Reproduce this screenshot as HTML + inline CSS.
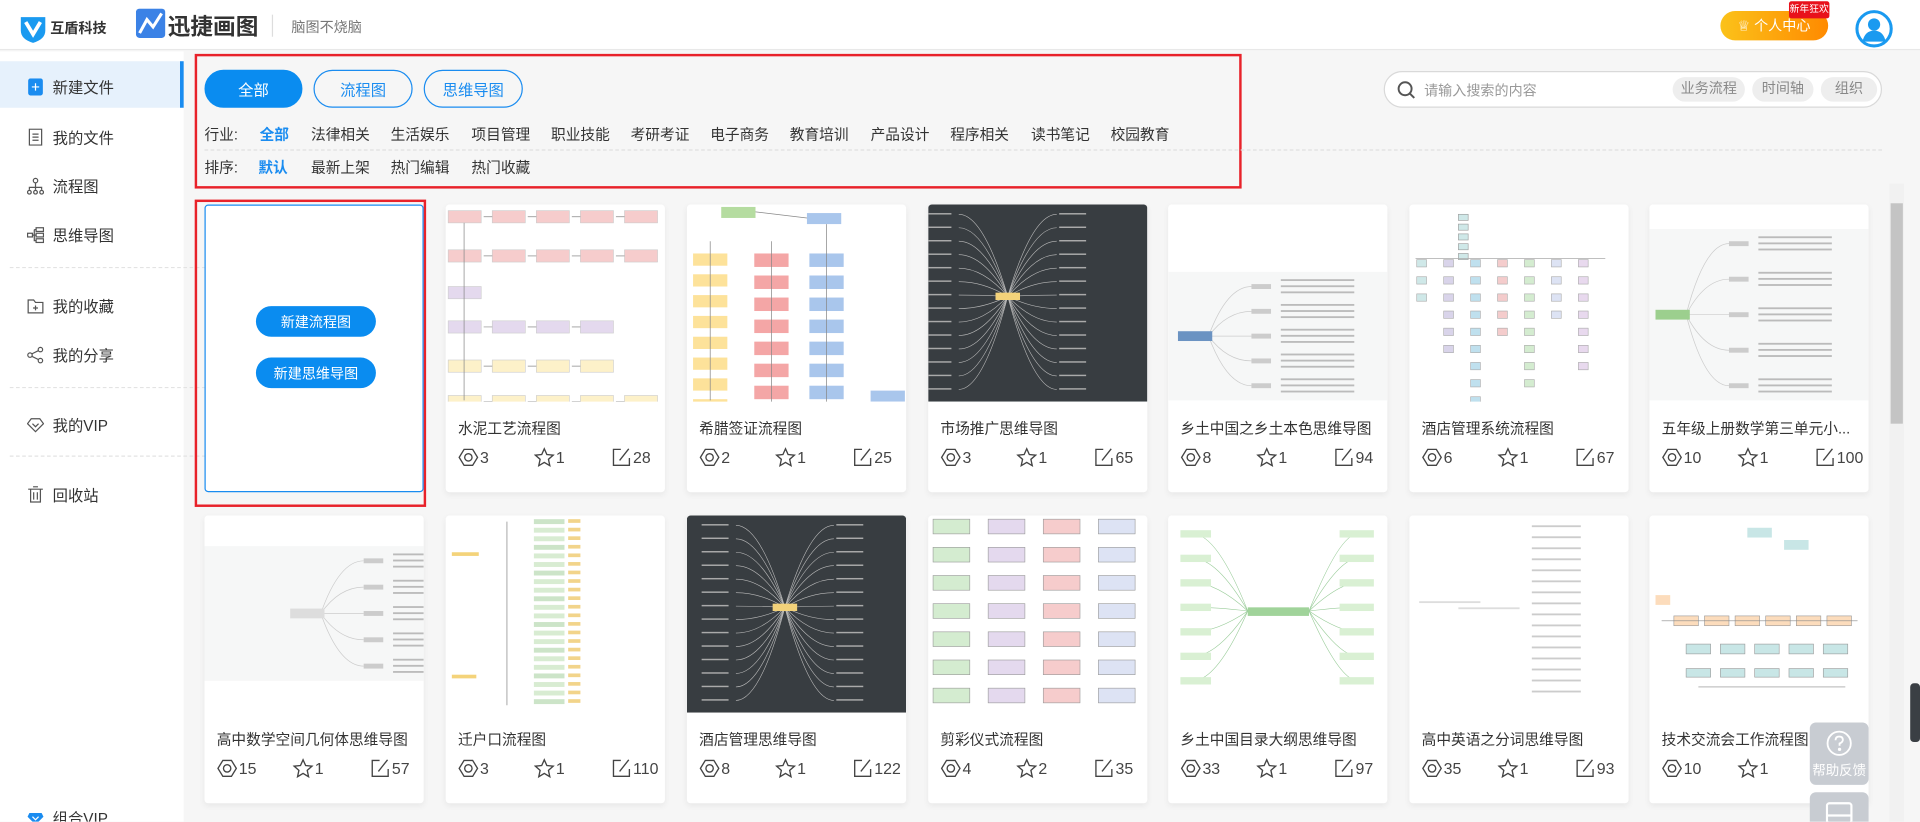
<!DOCTYPE html>
<html><head><meta charset="utf-8">
<style>
*{margin:0;padding:0;box-sizing:border-box}
html,body{width:1920px;height:822px;overflow:hidden;background:#f6f6f6}
body{font-family:"Liberation Sans","Noto Sans CJK SC",sans-serif;color:#333}
#w{position:absolute;left:0;top:0;width:1568px;height:671px;transform:scale(1.22449);transform-origin:0 0;background:#f6f6f6;overflow:hidden}
.a{position:absolute}
.hd{left:0;top:0;width:1568px;height:41px;background:#fff;border-bottom:1px solid #e8e8e8}
.sb{left:0;top:42px;width:150px;height:640px;background:#fff}
.si{position:absolute;left:22px;font-size:12.5px;color:#333;display:flex;align-items:center;gap:7px}
.si svg{width:14px;height:14px}
.dash{position:absolute;left:8px;border-top:1px dashed #e3e3e3;width:165px}
.btn{position:absolute;top:57px;height:31px;border-radius:16px;border:1px solid #1a8cf0;color:#1a8cf0;font-size:12.5px;display:flex;align-items:center;justify-content:center}
.t{position:absolute;font-size:12px;color:#333;white-space:nowrap}
.card{position:absolute;width:179px;height:235px;background:#fff;border-radius:3px;box-shadow:0 2px 5px rgba(0,0,0,.06);overflow:hidden}
.card svg.th{position:absolute;left:0;top:0;width:179px;height:161px}
.ti{position:absolute;left:10px;top:174px;font-size:12px;color:#333;white-space:nowrap}
.st{position:absolute;top:198px;font-size:13px;color:#444;display:flex;align-items:center;gap:1px}
.st svg{width:17px;height:17px}
.nb{position:absolute;left:41px;width:98px;height:25px;border-radius:13px;background:#0a8cf0;color:#fff;font-size:11.5px;display:flex;align-items:center;justify-content:center}
</style></head><body>
<div id="w">
<div class="a hd">
 <svg class="a" style="left:16px;top:12px" width="22" height="24" viewBox="0 0 22 24"><path d="M1 2 H21 V13 Q21 20 11 23 Q1 20 1 13Z" fill="#1a9af0"/><path d="M5 6 L11 16 L17 6" stroke="#fff" stroke-width="3" fill="none"/></svg>
 <div class="a" style="left:41px;top:15px;font-size:11.5px;font-weight:bold;color:#333">互盾科技</div>
 <svg class="a" style="left:111px;top:7px" width="24" height="24" viewBox="0 0 24 24"><rect width="24" height="24" rx="3" fill="#3b82e6"/><path d="M3 20 L9 9 L14 15 L21 4" stroke="#fff" stroke-width="2.5" fill="none"/></svg>
 <div class="a" style="left:137px;top:8px;font-size:18.5px;font-weight:bold;color:#333">迅捷画图</div>
 <div class="a" style="left:222px;top:12px;width:1px;height:18px;background:#ddd"></div>
 <div class="a" style="left:238px;top:14px;font-size:11.5px;color:#777">脑图不烧脑</div>
 <div class="a" style="left:1405px;top:9px;width:88px;height:24px;border-radius:12px;background:linear-gradient(90deg,#fbc21a,#ff8a00);color:#fff;font-size:11.5px;display:flex;align-items:center;padding-left:14px">♕&nbsp;个人中心</div>
 <div class="a" style="left:1461px;top:1px;width:33px;height:14px;background:#e8111b;color:#fff;font-size:8px;line-height:14px;text-align:center;border-radius:2px;white-space:nowrap;overflow:hidden">新年狂欢</div>
 <svg class="a" style="left:1515px;top:8px" width="31" height="31" viewBox="0 0 31 31"><circle cx="15.5" cy="15.5" r="14" fill="#fff" stroke="#1a9af0" stroke-width="2.5"/><circle cx="15.5" cy="12" r="5" fill="#1a9af0"/><path d="M6 26 Q8 17 15.5 17 Q23 17 25 26Z" fill="#1a9af0"/></svg>
</div>
<div class="a sb">
 <div class="a" style="left:0;top:8px;width:148px;height:38px;background:#e6f1fc"></div>
 <div class="a" style="left:147px;top:8px;width:3px;height:38px;background:#1a8cf0"></div>
 <div class="si" style="top:19px"><svg viewBox="0 0 14 14"><rect x="1" y="0" width="12" height="14" rx="2" fill="#1a8cf0"/><path d="M4 7H10M7 4V10" stroke="#fff"/></svg>新建文件</div>
 <div class="si" style="top:60px"><svg viewBox="0 0 14 14" fill="none" stroke="#555"><rect x="2" y="0.5" width="10" height="13"/><path d="M4.5 4.5H9.5M4.5 7H9.5M4.5 9.5H9.5"/></svg>我的文件</div>
 <div class="si" style="top:100px"><svg viewBox="0 0 14 14" fill="none" stroke="#555"><circle cx="7" cy="2.5" r="1.8"/><circle cx="2" cy="12" r="1.5"/><circle cx="7" cy="12" r="1.5"/><circle cx="12" cy="12" r="1.5"/><path d="M7 4.5V10M2 10V8H12V10"/></svg>流程图</div>
 <div class="si" style="top:140px"><svg viewBox="0 0 14 14" fill="none" stroke="#555"><rect x="0.5" y="5.5" width="4" height="3"/><rect x="7.5" y="1" width="6" height="3"/><rect x="7.5" y="5.5" width="6" height="3"/><rect x="7.5" y="10" width="6" height="3"/><path d="M4.5 7H7.5M6 2.5V11.5H7.5M6 2.5H7.5"/></svg>思维导图</div>
 <div class="dash" style="top:176px"></div>
 <div class="si" style="top:198px"><svg viewBox="0 0 14 14" fill="none" stroke="#555"><path d="M1 2H5.5L7 4H13V12.5H1Z"/><path d="M5 8.5H9M7 6.5V10.5"/></svg>我的收藏</div>
 <div class="si" style="top:238px"><svg viewBox="0 0 14 14" fill="none" stroke="#555"><circle cx="2.5" cy="7" r="1.8"/><circle cx="11" cy="2.5" r="1.8"/><circle cx="11" cy="11.5" r="1.8"/><path d="M4 6L9.5 3.3M4 8L9.5 10.7"/></svg>我的分享</div>
 <div class="dash" style="top:274px"></div>
 <div class="si" style="top:295px"><svg viewBox="0 0 14 14" fill="none" stroke="#555"><path d="M3.5 2H10.5L13.5 6L7 12.5L0.5 6Z"/><path d="M4.5 6L7 8.5L9.5 6"/></svg>我的VIP</div>
 <div class="dash" style="top:330px"></div>
 <div class="si" style="top:352px"><svg viewBox="0 0 14 14" fill="none" stroke="#555"><path d="M1 2.5H13M3 2.5V13H11V2.5M5.5 5V11M8.5 5V11M5 0.5H9"/></svg>回收站</div>
 <div class="si" style="top:616px"><svg viewBox="0 0 14 14"><path d="M2 3H12L13.5 6L7 12.5L0.5 6Z" fill="#1a8cf0"/><path d="M4.5 6L7 8.5L9.5 6" stroke="#fff" fill="none"/></svg>组合VIP</div>
</div>

<div class="a" style="left:159px;top:44px;width:855px;height:110px;border:2px solid #e8222a"></div>
<div class="btn" style="left:167px;width:80px;background:#0a8cf0;border-color:#0a8cf0;color:#fff">全部</div>
<div class="btn" style="left:256px;width:81px">流程图</div>
<div class="btn" style="left:346px;width:81px">思维导图</div>
<div class="t" style="left:167px;top:101px">行业:</div>
<div class="t" style="left:212px;top:101px;color:#1a8cf0;font-weight:bold">全部</div>
<div class="t" style="left:254px;top:101px">法律相关</div><div class="t" style="left:319px;top:101px">生活娱乐</div><div class="t" style="left:385px;top:101px">项目管理</div><div class="t" style="left:450px;top:101px">职业技能</div><div class="t" style="left:515px;top:101px">考研考证</div><div class="t" style="left:580px;top:101px">电子商务</div><div class="t" style="left:645px;top:101px">教育培训</div><div class="t" style="left:711px;top:101px">产品设计</div><div class="t" style="left:776px;top:101px">程序相关</div><div class="t" style="left:842px;top:101px">读书笔记</div><div class="t" style="left:907px;top:101px">校园教育</div>
<div class="a" style="left:167px;top:122px;width:1370px;border-top:1px dashed #e0e0e0"></div>
<div class="t" style="left:167px;top:128px">排序:</div>
<div class="t" style="left:211px;top:128px;color:#1a8cf0;font-weight:bold">默认</div>
<div class="t" style="left:254px;top:128px">最新上架</div><div class="t" style="left:319px;top:128px">热门编辑</div><div class="t" style="left:385px;top:128px">热门收藏</div>

<div class="a" style="left:1130px;top:58px;width:407px;height:30px;border:1px solid #d9d9d9;border-radius:15px;background:#fff">
 <svg class="a" style="left:10px;top:7px" width="15" height="15" viewBox="0 0 15 15" fill="none" stroke="#555" stroke-width="1.6"><circle cx="6.5" cy="6.5" r="5.3"/><path d="M10.5 10.5L14 14"/></svg>
 <div class="a" style="left:32px;top:7px;font-size:11.5px;color:#999">请输入搜索的内容</div>
 <div class="a" style="left:235px;top:4px;width:59px;height:20px;border-radius:10px;background:#eee;color:#888;font-size:11.5px;line-height:20px;text-align:center">业务流程</div>
 <div class="a" style="left:300px;top:4px;width:50px;height:20px;border-radius:10px;background:#eee;color:#888;font-size:11.5px;line-height:20px;text-align:center">时间轴</div>
 <div class="a" style="left:356px;top:4px;width:46px;height:20px;border-radius:10px;background:#eee;color:#888;font-size:11.5px;line-height:20px;text-align:center">组织</div>
</div>

<div class="a" style="left:1543px;top:150px;width:12px;height:530px;background:#f1f1f1"></div>
<div class="a" style="left:1544px;top:166px;width:10px;height:180px;background:#c4c4c4"></div>

<div class="a" style="left:159px;top:163px;width:189px;height:251px;border:2px solid #e8222a"></div>
<div class="card" style="left:167px;top:167px;border:1px solid #1a8cf0;box-shadow:none">
 <div class="nb" style="top:82px">新建流程图</div>
 <div class="nb" style="top:124px">新建思维导图</div>
</div>

<div id="cards"></div>

<div class="a" style="left:1478px;top:590px;width:48px;height:51px;border-radius:5px;background:#c8ccd2;color:#fff;font-size:11px;text-align:center">
 <svg style="margin-top:6px" width="22" height="22" viewBox="0 0 22 22" fill="none" stroke="#fff" stroke-width="1.5"><circle cx="11" cy="11" r="9.5"/><path d="M8 8.5Q8 5.5 11 5.5Q14 5.5 14 8.2Q14 10 11.3 11.2V13"/><circle cx="11.3" cy="16" r=".6" fill="#fff"/></svg>
 <div>帮助反馈</div>
</div>
<div class="a" style="left:1478px;top:647px;width:48px;height:30px;border-radius:5px;background:#c8ccd2">
 <svg style="position:absolute;left:13px;top:8px" width="22" height="18" viewBox="0 0 22 18" fill="none" stroke="#fff" stroke-width="1.8"><rect x="1" y="1" width="20" height="16" rx="2"/><path d="M1 11H21"/></svg>
</div>
<div class="a" style="left:1560px;top:558px;width:8px;height:48px;background:#3a3f44;border-radius:3px"></div>
</div>

<script>
const eye='<svg viewBox="0 0 17 17" fill="none" stroke="#444" stroke-width="1.1"><path d="M5 2H12L16 8.5L12 15H5L1 8.5Z"/><circle cx="8.5" cy="8.5" r="3"/></svg>';
const star='<svg viewBox="0 0 17 17" fill="none" stroke="#444" stroke-width="1.1"><path d="M8.5 1.5L10.6 6.2L15.8 6.7L11.9 10.1L13 15.3L8.5 12.6L4 15.3L5.1 10.1L1.2 6.7L6.4 6.2Z"/></svg>';
const ed='<svg viewBox="0 0 17 17" fill="none" stroke="#444" stroke-width="1.1"><path d="M8 2H2V15H15V9"/><path d="M14.5 1.5L7 11"/></svg>';
function R(x,y,w,h,c,s){return `<rect x="${x}" y="${y}" width="${w}" height="${h}" fill="${c}" stroke="${s||'none'}" stroke-width=".5"/>`}
function L(a,b,c,d,col){return `<path d="M${a} ${b}L${c} ${d}" stroke="${col||'#888'}" stroke-width=".6" fill="none"/>`}
function flow1(){let s='';const rows=[[5,'#f6cccc',5],[37,'#f6cccc',5],[67,'#e4d9ee',1],[95,'#e4d9ee',4],[127,'#fdf1c9',4],[156,'#fdf1c9',5]];rows.forEach(r=>{for(let i=0;i<r[2];i++){s+=R(2+i*36,r[0],27,10,r[1],'#ccc');if(i)s+=L(i*36-5,r[0]+5,i*36+2,r[0]+5)}});s+=L(15,15,15,160);return s}
function flow2(){let s=R(28,2,28,9,'#b5dca0')+R(98,7,28,9,'#a9c6ec')+L(56,6,98,11);for(let i=0;i<8;i++){s+=R(5,40+i*17,28,10,'#fde29a');s+=R(55,40+i*18,28,11,'#f4a6a6');s+=R(100,40+i*18,28,11,'#a9c6ec')}s+=L(19,30,19,160)+L(69,30,69,165)+L(114,16,114,165)+R(150,152,28,9,'#a9c6ec');return s}
function dark(cx){let s=R(0,0,179,161,'#383d41');for(let i=0;i<14;i++){let y=8+i*11;s+=`<path d="M${cx} 75 Q${cx-20} ${y} ${cx-40} ${y}" stroke="#bbb" stroke-width=".5" fill="none"/>`+R(cx-68,y-1,22,1.2,'#aaa');s+=`<path d="M${cx} 75 Q${cx+20} ${y} ${cx+40} ${y}" stroke="#bbb" stroke-width=".5" fill="none"/>`+R(cx+42,y-1,22,1.2,'#aaa')}s+=R(cx-10,72,20,6,'#f3d27a');return s}
function mind(bg,node,x0){let s=R(0,0,179,161,'#fff')+R(0,bg[0],179,bg[1],'#f6f7f7');for(let i=0;i<5;i++){let y=bg[0]+12+i*(bg[1]-24)/4;s+=`<path d="M${x0+25} ${bg[0]+bg[1]/2} Q${x0+40} ${y} ${x0+60} ${y}" stroke="#ccc" stroke-width=".6" fill="none"/>`+R(x0+60,y-2,16,4,'#ccc');for(let j=0;j<3;j++)s+=R(x0+84,y-6+j*5,60,1.5,'#bbb')}s+=R(x0,bg[0]+bg[1]/2-4,28,8,node);return s}
function grid(cols,rows){let s='';cols.forEach((c,i)=>{for(let j=0;j<rows;j++)s+=R(4+i*45,3+j*23,30,12,c,'#999')});return s}
function tree(){let s='';const cs=['#cfe8e8','#d9d4ea','#bfe0ee','#f4cccc','#d4ecd0','#dde3f4','#e8d9ee'];for(let i=0;i<7;i++)for(let j=0;j<(3+(i*3)%7);j++)s+=R(6+i*22,45+j*14,8,6,cs[i],'#aaa');for(let i=0;i<5;i++)s+=R(40,8+i*8,8,5,'#cfe8e8','#999');s+=L(5,44,160,44,'#aaa');return s}
function ment(){let s=R(0,0,179,161,'#fff');for(let i=0;i<16;i++){s+=R(100,8+i*9,40,1.5,'#ccc')}s+=R(8,70,50,1.5,'#ddd')+R(40,75,50,1.5,'#ddd');return s}
function radial(){let s=R(0,0,179,161,'#fff')+R(65,75,50,7,'#a0d39a');for(let i=0;i<7;i++){let y=15+i*20;s+=`<path d="M65 78 Q40 ${y} 20 ${y}" stroke="#9c9" stroke-width=".5" fill="none"/>`+R(10,y-3,25,6,'#d9f0d3');s+=`<path d="M115 78 Q140 ${y} 155 ${y}" stroke="#9c9" stroke-width=".5" fill="none"/>`+R(140,y-3,28,6,'#d9f0d3')}return s}
function flow7(){let s='';s+=R(80,10,20,8,'#c8e6e6')+R(110,20,20,8,'#c8e6e6')+R(5,65,12,8,'#fcdcbc');for(let i=0;i<6;i++)s+=R(20+i*25,82,20,8,'#fcdcbc','#999');for(let i=0;i<5;i++)s+=R(30+i*28,105,20,8,'#c8e6e6','#999')+R(30+i*28,125,20,7,'#c8e6e6','#999');s+=L(10,86,170,86)+L(40,140,160,140);return s}
function vtree(){let s=R(5,30,22,3,'#f4d37a');s+=L(50,5,50,155);for(let i=0;i<22;i++){s+=R(72,3+i*7,25,4,i%3?'#d8ecd2':'#cce4c8');s+=R(100,3+i*7,10,3,'#f2d48a')}s+=R(5,130,20,3,'#f4d37a');return s}
const cards=[
[364,167,'水泥工艺流程图',3,1,28,flow1()],
[561,167,'希腊签证流程图',2,1,25,flow2()],
[758,167,'市场推广思维导图',3,1,65,dark(65)],
[954,167,'乡土中国之乡土本色思维导图',8,1,94,mind([55,105],'#6b93c2',8)],
[1151,167,'酒店管理系统流程图',6,1,67,tree()],
[1347,167,'五年级上册数学第三单元小...',10,1,100,mind([20,140],'#9ccf8e',5)],
[167,421,'高中数学空间几何体思维导图',15,1,57,mind([25,110],'#ddd',70)],
[364,421,'迁户口流程图',3,1,110,vtree()],
[561,421,'酒店管理思维导图',8,1,122,dark(80)],
[758,421,'剪彩仪式流程图',4,2,35,grid(['#d4ecd0','#e4d9ee','#f6cccc','#dde3f4'],7)],
[954,421,'乡土中国目录大纲思维导图',33,1,97,radial()],
[1151,421,'高中英语之分词思维导图',35,1,93,ment()],
[1347,421,'技术交流会工作流程图',10,1,50,flow7()]];
let h='';cards.forEach(c=>{h+=`<div class="card" style="left:${c[0]}px;top:${c[1]}px"><svg class="th" viewBox="0 0 179 161">${c[6]}</svg><div class="ti">${c[2]}</div><div class="st" style="left:10px">${eye}${c[3]}</div><div class="st" style="left:72px">${star}${c[4]}</div><div class="st" style="left:135px">${ed}${c[5]}</div></div>`});
document.getElementById('cards').innerHTML=h;
</script>
</body></html>
